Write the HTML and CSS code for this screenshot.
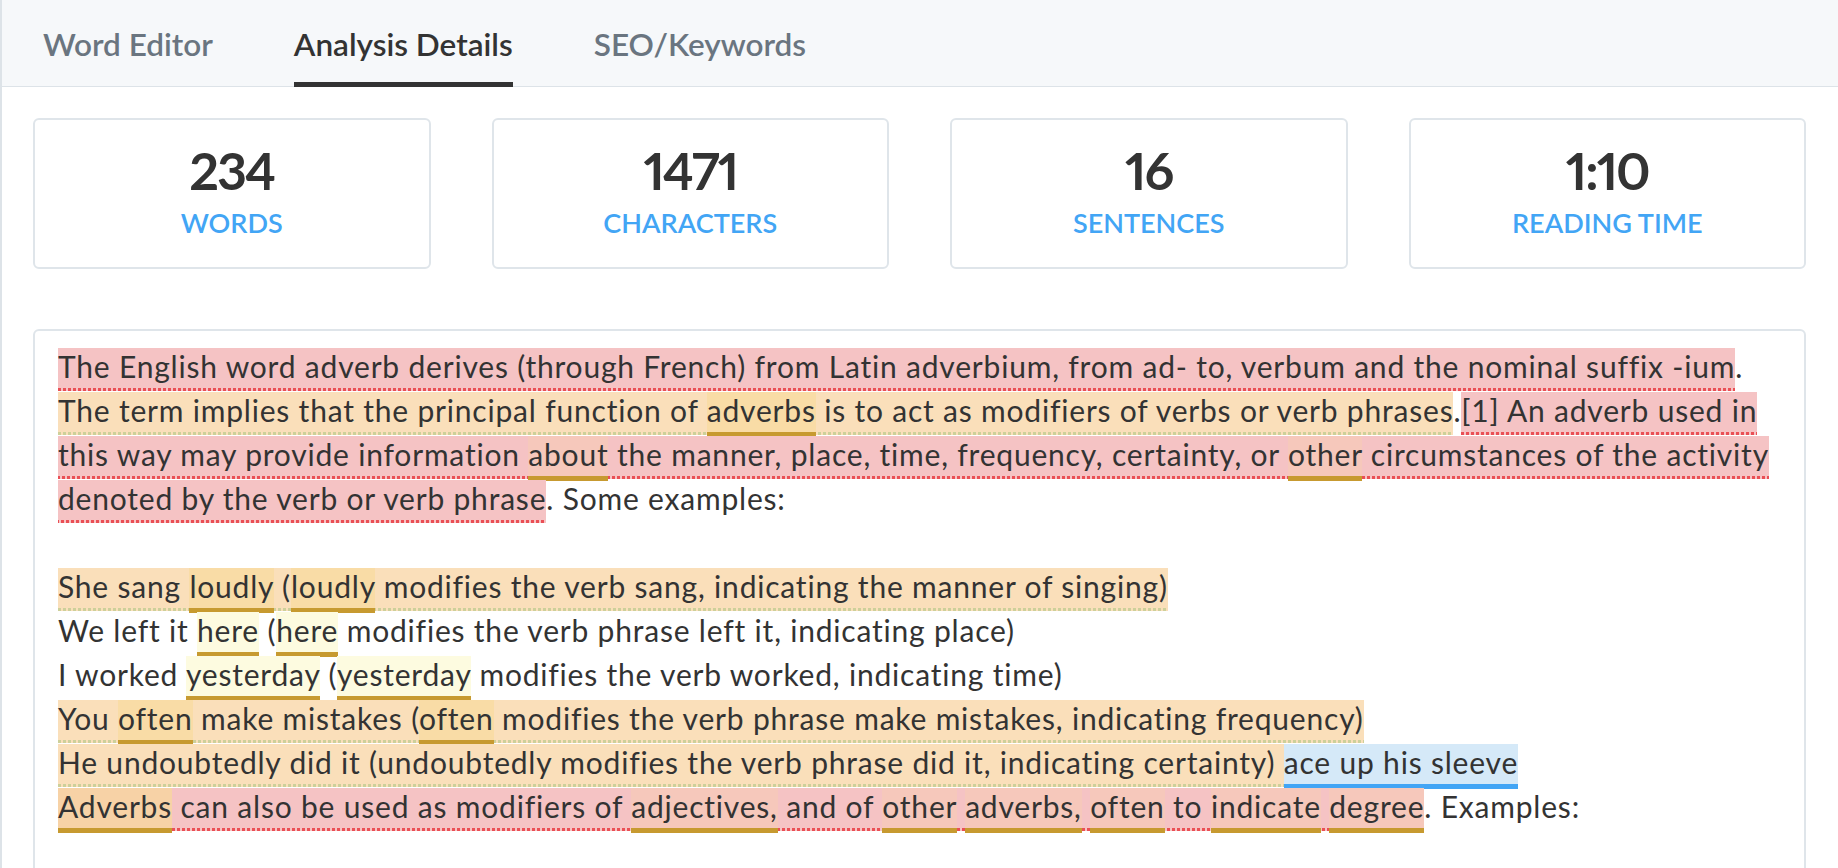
FILE: index.html
```html
<!DOCTYPE html>
<html lang="en">
<head>
<meta charset="utf-8">
<title>Analysis Details</title>
<link rel="stylesheet" href="styles.css">
</head>
<body>
<div class="app">
  <nav class="tabs">
    <a class="tab">Word Editor</a>
    <a class="tab active">Analysis Details</a>
    <a class="tab">SEO/Keywords</a>
  </nav>
  <main class="content">
    <section class="stats">
      <div class="stat"><div class="stat-value">234</div><div class="stat-label">WORDS</div></div>
      <div class="stat"><div class="stat-value">1471</div><div class="stat-label">CHARACTERS</div></div>
      <div class="stat"><div class="stat-value">16</div><div class="stat-label">SENTENCES</div></div>
      <div class="stat"><div class="stat-value">1:10</div><div class="stat-label">READING TIME</div></div>
    </section>
    <article class="analysis">
      <p class="text"><span class="s-red">The English word adverb derives (through French) from Latin adverbium, from ad- to, verbum and the nominal suffix -ium</span>.<br><span class="s-orange">The term implies that the principal function of <span class="w">adverbs</span> is to act as modifiers of verbs or verb phrases</span>.<span class="s-red">[1] An adverb used in<br>this way may provide information <span class="w">about</span> the manner, place, time, frequency, certainty, or <span class="w">other</span> circumstances of the activity<br>denoted by the verb or verb phrase</span>. Some examples:<br><br><span class="s-orange">She sang <span class="w">loudly</span> (<span class="w">loudly</span> modifies the verb sang, indicating the manner of singing)</span><br>We left it <span class="w">here</span> (<span class="w">here</span> modifies the verb phrase left it, indicating place)<br>I worked <span class="w">yesterday</span> (<span class="w">yesterday</span> modifies the verb worked, indicating time)<br><span class="s-orange">You <span class="w">often</span> make mistakes (<span class="w">often</span> modifies the verb phrase make mistakes, indicating frequency)</span><br><span class="s-orange">He undoubtedly did it (undoubtedly modifies the verb phrase did it, indicating certainty) </span><span class="s-blue">ace up his sleeve</span><br><span class="w w-lead">Adverbs</span><span class="s-red"> can also be used as modifiers of <span class="w">adjectives,</span> and of <span class="w">other</span> <span class="w">adverbs,</span> <span class="w">often</span> to <span class="w">indicate</span> <span class="w">degree</span></span>. Examples:</p>
    </article>
  </main>
</div>
</body>
</html>
```

FILE: styles.css
```css
html, body {
  margin: 0;
  padding: 0;
  background: #ffffff;
}

body {
  font-family: "Lato", "Liberation Sans", sans-serif;
  color: #333333;
  overflow: hidden;
}

.app {
  min-height: 868px;
  border-left: 2px solid #dde3e8;
  box-sizing: border-box;
}

/* Tabs */
.tabs {
  display: flex;
  gap: 81px;
  height: 86px;
  padding-left: 41px;
  background: #f6f8fa;
  border-bottom: 1px solid #dde3e8;
}

.tab {
  display: flex;
  align-items: center;
  margin-bottom: -1px;
  font-size: 31.5px;
  font-weight: 600;
  color: #6a7580;
  cursor: pointer;
}

.tab.active {
  color: #333333;
  box-shadow: inset 0 -5px 0 #333333;
}

/* Content */
.content {
  padding: 31px 32px 0 31px;
}

.stats {
  display: grid;
  grid-template-columns: repeat(4, 1fr);
  gap: 61px;
}

.stat {
  border: 2px solid #dfe5ea;
  border-radius: 6px;
  padding: 24px 0 31px;
  text-align: center;
}

.stat-value {
  font-size: 52px;
  line-height: 52px;
  font-weight: 700;
  letter-spacing: -2px;
  font-variant-numeric: proportional-nums;
  font-feature-settings: "pnum" 1;
  color: #333333;
}

.stat-label {
  margin-top: 13px;
  font-size: 27px;
  line-height: 27px;
  font-weight: 600;
  color: #42a5f5;
}

.analysis {
  margin-top: 60px;
  border: 2px solid #dfe5ea;
  border-radius: 6px;
  padding: 13px 23px 40px;
  min-height: 600px;
}

.text {
  margin: 0;
  font-size: 30px;
  line-height: 44px;
  letter-spacing: 0.8px;
  white-space: nowrap;
  color: #333333;
}

/* Sentence highlights: dotted underline drawn as square dots */
.s-red,
.s-orange {
  padding: 0 0 7px;
  background-repeat: repeat-x, no-repeat;
  background-position: left bottom, 0 0;
  background-size: 5px 3px, 100% 100%;
}

.s-red {
  background-image: linear-gradient(to right, #ea4f55 60%, transparent 60%);
  background-color: #f5c3c4;
}

.s-orange {
  background-image: linear-gradient(to right, #cdd09a 60%, transparent 60%);
  background-color: #fadfba;
}

.s-blue,
.w {
  padding: 0 0 4px;
}

.s-blue {
  background: #d5e9f8;
  border-bottom: 5px solid #42a5f5;
}

.w {
  background: #fdfbe0;
  border-bottom: 5px solid #c79a30;
}

.s-orange .w {
  background: #f9dca6;
}

.s-red .w {
  background: #f6c8bb;
}

.w-lead {
  background: #f7d2a6;
}
```
